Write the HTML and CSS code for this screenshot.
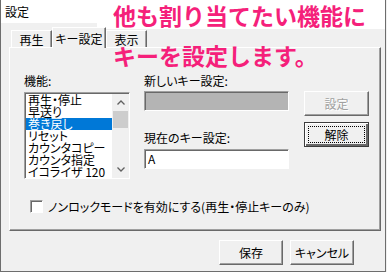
FILE: index.html
```html
<!DOCTYPE html>
<html lang="ja">
<head>
    <meta charset="UTF-8">
    <title>設定</title>
    <link rel="stylesheet" href="styles.css">
</head>
<body>
<div class="window">
    <div class="titlebar">
        <span class="title">設定</span>
        <svg class="close" width="10" height="10" viewBox="0 0 10 10">
            <path d="M0.5 0.5 L9.5 9.5 M9.5 0.5 L0.5 9.5" stroke="#000" stroke-width="1" fill="none"/>
        </svg>
    </div>

    <div class="tabs">
        <div class="tab tab-play">再生</div>
        <div class="tab tab-key active">キー設定</div>
        <div class="tab tab-view">表示</div>
    </div>

    <div class="panel">
        <div class="fields">
            <div class="col-list">
                <div class="label">機能:</div>
                <div class="listbox">
                    <ul class="items">
                        <li>再生・停止</li>
                        <li>早送り</li>
                        <li class="selected">巻き戻し</li>
                        <li>リセット</li>
                        <li>カウンタコピー</li>
                        <li>カウンタ指定</li>
                        <li>イコライザ 120</li>
                    </ul>
                    <div class="scrollbar">
                        <div class="arrow">
                            <svg width="8" height="5" viewBox="0 0 8 5"><path d="M0.5 4.5 L4 1 L7.5 4.5" stroke="#606060" stroke-width="1.3" fill="none"/></svg>
                        </div>
                        <div class="thumb"></div>
                        <div class="track"></div>
                        <div class="arrow">
                            <svg width="8" height="5" viewBox="0 0 8 5"><path d="M0.5 0.5 L4 4 L7.5 0.5" stroke="#606060" stroke-width="1.3" fill="none"/></svg>
                        </div>
                    </div>
                </div>
            </div>

            <div class="col-keys">
                <div class="label">新しいキー設定:</div>
                <div class="edit disabled"></div>
                <div class="label current">現在のキー設定:</div>
                <div class="edit">A</div>
            </div>

            <div class="col-buttons">
                <button class="btn" disabled>設定</button>
                <button class="btn default">解除</button>
            </div>
        </div>

        <div class="check">
            <span class="box"></span>
            <span>ノンロックモードを有効にする(再生・停止キーのみ)</span>
        </div>
    </div>

    <div class="footer">
        <button class="btn">保存</button>
        <button class="btn">キャンセル</button>
    </div>

    <div class="note">
        <div class="note-line first">他も割り当てたい機能に</div>
        <div class="note-line">キーを設定します。</div>
    </div>
</div>
</body>
</html>
```

FILE: styles.css
```css
body {
    margin: 0;
    font-family: "Noto Sans CJK JP", sans-serif;
    font-size: 12px;
    line-height: 12px;
    font-feature-settings: "palt";
    color: #000;
    background-color: #f0f0f0;
}

.window {
    position: relative;
    width: 386px;
    height: 272px;
    box-sizing: border-box;
    border: 1px solid #6d6d6d;
    border-top: none;
    background-color: #f0f0f0;
}

.titlebar {
    display: flex;
    align-items: center;
    height: 23px;
    padding: 0 9px 0 4px;
    background-color: #ffffff;
}

.titlebar .close {
    margin-left: auto;
}

/* tabs */
.tabs {
    display: flex;
    align-items: flex-end;
    height: 20px;
    margin-top: 4px;
    padding-left: 10px;
}

.tab {
    position: relative;
    box-sizing: border-box;
    height: 17px;
    padding-top: 3px;
    text-align: center;
    border-top: 1px solid #ffffff;
    border-left: 1px solid #ffffff;
    border-right: 1px solid #696969;
    box-shadow: inset -1px 0 #a0a0a0;
}

.tab-play {
    width: 41px;
}

.tab-key {
    width: 54px;
}

.tab-view {
    width: 41px;
}

.tab.active {
    height: 21px;
    margin-bottom: -1px;
    padding-top: 5px;
    background-color: #f0f0f0;
    z-index: 1;
}

/* panel */
.panel {
    box-sizing: border-box;
    width: 372px;
    height: 184px;
    margin-left: 8px;
    padding: 27px 0 0 14px;
    border-top: 1px solid #ffffff;
    border-left: 1px solid #ffffff;
    border-right: 1px solid #696969;
    border-bottom: 1px solid #696969;
    box-shadow: inset -1px -1px #a0a0a0;
}

.fields {
    display: flex;
    align-items: flex-start;
    height: 104px;
}

.label {
    height: 12px;
}

.col-list .label {
    margin-bottom: 5px;
}

.listbox {
    display: flex;
    width: 106px;
    height: 87px;
    box-sizing: border-box;
    border: 1px solid;
    border-color: #a0a0a0 #ffffff #ffffff #a0a0a0;
    box-shadow: inset 1px 1px #696969;
    padding: 1px 0 0 1px;
    background-color: #ffffff;
}

.items {
    list-style: none;
    margin: 0;
    padding: 0;
    width: 86px;
}

.items li {
    height: 12px;
    padding-left: 2px;
    white-space: nowrap;
}

.items li.selected {
    background-color: #0078d7;
    color: #ffffff;
}

.scrollbar {
    display: flex;
    flex-direction: column;
    width: 17px;
    background-color: #f0f0f0;
}

.scrollbar .arrow {
    display: flex;
    align-items: center;
    justify-content: center;
    height: 17px;
}

.scrollbar .thumb {
    height: 17px;
    margin: 0 1px;
    background-color: #cdcdcd;
}

.scrollbar .track {
    flex: 1;
}

.col-keys {
    display: flex;
    flex-direction: column;
    margin-left: 14px;
}

.col-keys .label {
    margin-bottom: 4px;
}

.col-keys .label.current {
    margin-top: 21px;
    margin-bottom: 5px;
}

.edit {
    box-sizing: border-box;
    width: 145px;
    height: 20px;
    padding: 3px 0 0 3px;
    border: 1px solid;
    border-color: #a0a0a0 #ffffff #ffffff #a0a0a0;
    box-shadow: inset 1px 1px #696969;
    background-color: #ffffff;
}

.edit.disabled {
    background-color: #b4b4b4;
}

.col-buttons {
    display: flex;
    flex-direction: column;
    gap: 6px;
    margin-top: 16px;
    margin-left: 15px;
}

.btn {
    box-sizing: border-box;
    width: 65px;
    height: 25px;
    padding: 0;
    font-family: "Noto Sans CJK JP", sans-serif;
    font-size: 12px;
    line-height: 12px;
    font-feature-settings: "palt";
    color: #000;
    background-color: #f0f0f0;
    border: 1px solid;
    border-color: #ffffff #696969 #696969 #ffffff;
    box-shadow: inset -1px -1px #a0a0a0;
}

.btn:disabled {
    color: #a0a0a0;
    text-shadow: 1px 1px #ffffff;
}

.btn.default {
    border: 1px solid #3c3c3c;
    box-shadow: inset 1px 1px #ffffff, inset -2px -2px #696969;
    outline: 1px dotted #000;
    outline-offset: -5px;
}

.check {
    display: flex;
    align-items: center;
    gap: 5px;
    margin: 21px 0 0 6px;
}

.check .box {
    box-sizing: border-box;
    width: 13px;
    height: 13px;
    border: 1px solid;
    border-color: #a0a0a0 #ffffff #ffffff #a0a0a0;
    box-shadow: inset 1px 1px #696969;
    background-color: #ffffff;
}

.footer {
    display: flex;
    justify-content: flex-end;
    gap: 7px;
    margin-top: 9px;
    padding-right: 31px;
}

.footer .btn {
    width: 64px;
}

/* pink annotation laid over the dialog */
.note {
    position: absolute;
    top: 0;
    left: 96px;
    right: 0;
    color: #f5207a;
    font-size: 23px;
    font-weight: 700;
    line-height: 23px;
    font-feature-settings: normal;
}

.note-line {
    padding-left: 16px;
    white-space: nowrap;
}

.note-line.first {
    height: 29px;
    padding-top: 4px;
    box-sizing: border-box;
    background-color: #ffffff;
}

.note-line + .note-line {
    margin-top: 15px;
    text-shadow: 0 0 2px #f0f0f0;
}
```
